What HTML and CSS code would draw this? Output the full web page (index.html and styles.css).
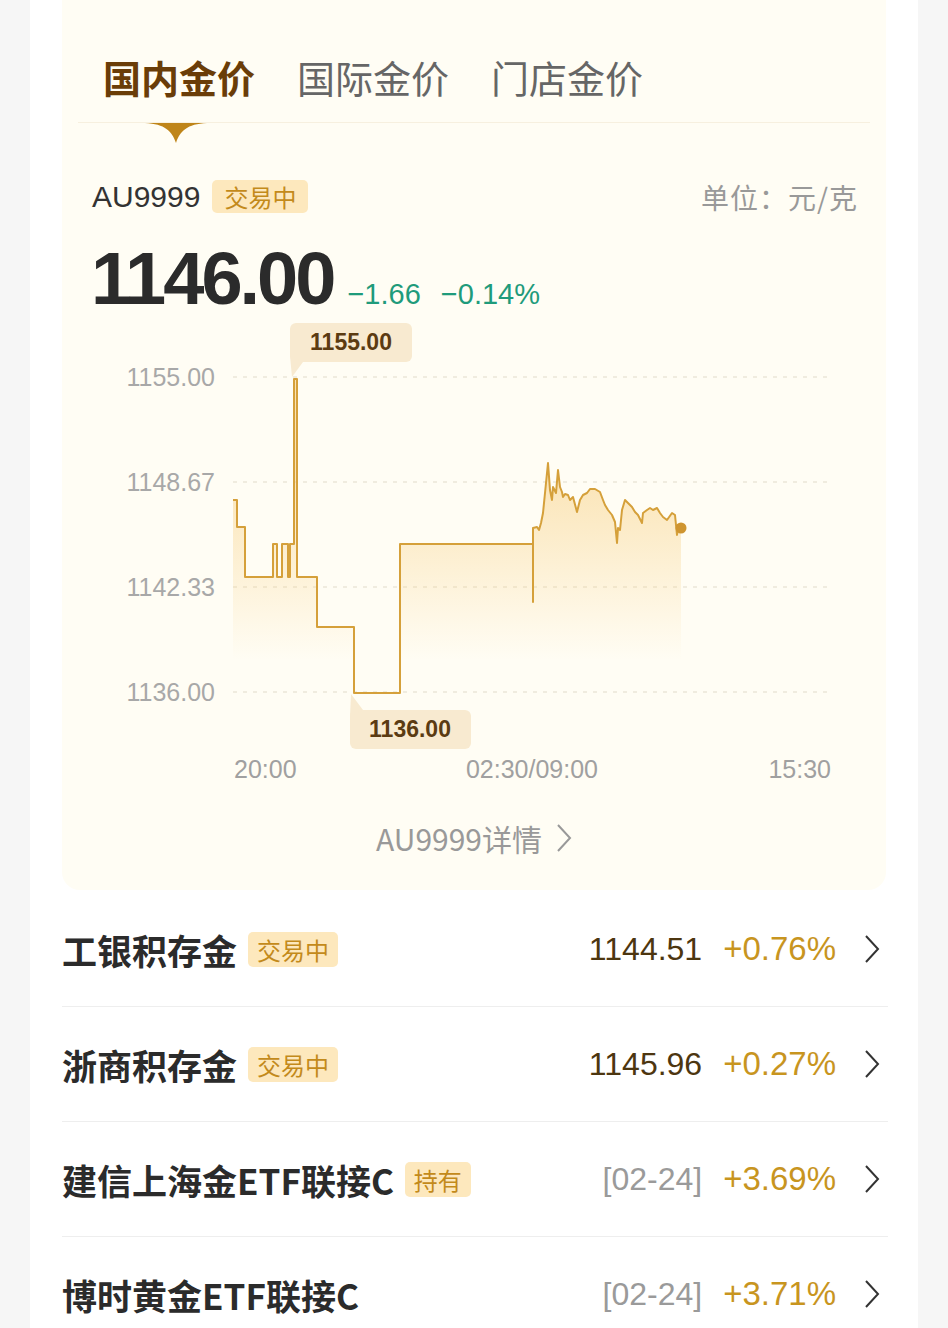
FILE: index.html
```html
<!DOCTYPE html>
<html lang="zh-CN">
<head>
    <meta charset="UTF-8">
    <meta name="viewport" content="width=device-width, initial-scale=1.0">
    <title>金价</title>
    <link rel="stylesheet" href="styles.css">
</head>
<body>
    <div class="page">
        <section class="card">
            <nav class="tabs">
                <span class="tab active">国内金价</span>
                <span class="tab">国际金价</span>
                <span class="tab">门店金价</span>
            </nav>

            <div class="quote-head">
                <div class="quote-name">
                    <span class="code">AU9999</span>
                    <span class="badge">交易中</span>
                </div>
                <span class="unit">单位：元/克</span>
            </div>

            <div class="quote-price">
                <span class="price">1146.00</span>
                <span class="change">−1.66</span>
                <span class="change">−0.14%</span>
            </div>

            <svg class="chart" width="824" height="470" viewBox="62 320 824 470">
                <defs>
                    <linearGradient id="fill" x1="0" y1="460" x2="0" y2="660" gradientUnits="userSpaceOnUse">
                        <stop offset="0" stop-color="#f6c870" stop-opacity="0.5"/>
                        <stop offset="1" stop-color="#f6c870" stop-opacity="0"/>
                    </linearGradient>
                </defs>

                <g class="grid">
                    <line x1="233" y1="377" x2="833" y2="377"/>
                    <line x1="233" y1="482" x2="833" y2="482"/>
                    <line x1="233" y1="587" x2="833" y2="587"/>
                    <line x1="233" y1="692" x2="833" y2="692"/>
                </g>

                <g class="y-labels">
                    <text x="215" y="386">1155.00</text>
                    <text x="215" y="491">1148.67</text>
                    <text x="215" y="596">1142.33</text>
                    <text x="215" y="701">1136.00</text>
                </g>

                <path class="area" d="M233,500 H237 V527 H245 V577 H273 V544 H277 V577 H282 V544 H288 V577 H290 V544 H292 V544 H294 V379 H297 V577 H317 V627 H354 V693 H400 V544 H533 V602 V528 L537,527 L539,530 L541,523 L543,513 L545,493 L548,463 L550,490 L552,500 L553,487 L556,493 L558,470 L560,487 L562,492 L563,497 L565,494 L568,495 L570,500 L573,497 L577,512 L580,500 L583,495 L587,493 L590,489 L595,489 L600,492 L603,500 L605,505 L608,510 L612,515 L615,522 L617,543 L618,528 L620,530 L622,510 L625,500 L628,503 L632,507 L635,512 L638,515 L642,523 L643,513 L647,510 L650,508 L653,510 L657,508 L660,513 L663,517 L667,520 L672,513 L675,515 L677,535 L678,527 L681,528 V700 H233 Z"/>
                <path class="line" d="M233,500 H237 V527 H245 V577 H273 V544 H277 V577 H282 V544 H288 V577 H290 V544 H292 V544 H294 V379 H297 V577 H317 V627 H354 V693 H400 V544 H533 V602 V528 L537,527 L539,530 L541,523 L543,513 L545,493 L548,463 L550,490 L552,500 L553,487 L556,493 L558,470 L560,487 L562,492 L563,497 L565,494 L568,495 L570,500 L573,497 L577,512 L580,500 L583,495 L587,493 L590,489 L595,489 L600,492 L603,500 L605,505 L608,510 L612,515 L615,522 L617,543 L618,528 L620,530 L622,510 L625,500 L628,503 L632,507 L635,512 L638,515 L642,523 L643,513 L647,510 L650,508 L653,510 L657,508 L660,513 L663,517 L667,520 L672,513 L675,515 L677,535 L678,527 L681,528"/>
                <circle class="dot" cx="681" cy="528" r="5.5"/>

                <g class="tip">
                    <rect x="290" y="323" width="122" height="39" rx="6"/>
                    <polygon points="290,356 303,362 292,377"/>
                    <text x="351" y="350">1155.00</text>
                </g>
                <g class="tip">
                    <rect x="350" y="710" width="121" height="39" rx="6"/>
                    <polygon points="350,716 363,710 351,694"/>
                    <text x="410" y="737">1136.00</text>
                </g>

                <g class="x-labels">
                    <text x="234" y="778" text-anchor="start">20:00</text>
                    <text x="532" y="778" text-anchor="middle">02:30/09:00</text>
                    <text x="831" y="778" text-anchor="end">15:30</text>
                </g>
            </svg>

            <a class="detail" href="#">
                <span>AU9999详情</span>
                <svg width="16" height="30" viewBox="0 0 16 30"><polyline points="2,2 14,15 2,28"/></svg>
            </a>
        </section>

        <ul class="fund-list">
            <li class="fund">
                <div class="fund-name">工银积存金<span class="badge">交易中</span></div>
                <div class="fund-data">
                    <span class="fund-price">1144.51</span>
                    <span class="fund-change">+0.76%</span>
                    <svg class="arrow" width="16" height="30" viewBox="0 0 16 30"><polyline points="2,2 14,15 2,28"/></svg>
                </div>
            </li>
            <li class="fund">
                <div class="fund-name">浙商积存金<span class="badge">交易中</span></div>
                <div class="fund-data">
                    <span class="fund-price">1145.96</span>
                    <span class="fund-change">+0.27%</span>
                    <svg class="arrow" width="16" height="30" viewBox="0 0 16 30"><polyline points="2,2 14,15 2,28"/></svg>
                </div>
            </li>
            <li class="fund">
                <div class="fund-name">建信上海金ETF联接C<span class="badge">持有</span></div>
                <div class="fund-data">
                    <span class="fund-date">[02-24]</span>
                    <span class="fund-change">+3.69%</span>
                    <svg class="arrow" width="16" height="30" viewBox="0 0 16 30"><polyline points="2,2 14,15 2,28"/></svg>
                </div>
            </li>
            <li class="fund">
                <div class="fund-name">博时黄金ETF联接C</div>
                <div class="fund-data">
                    <span class="fund-date">[02-24]</span>
                    <span class="fund-change">+3.71%</span>
                    <svg class="arrow" width="16" height="30" viewBox="0 0 16 30"><polyline points="2,2 14,15 2,28"/></svg>
                </div>
            </li>
        </ul>
    </div>
</body>
</html>
```

FILE: styles.css
```css
body {
    margin: 0;
    padding: 0;
    background-color: #f6f6f6;
    font-family: "Noto Sans CJK SC", sans-serif;
}
.page {
    width: 888px;
    min-height: 100vh;
    margin: 0 auto;
    background-color: #fff;
    overflow: hidden;
}
.card {
    margin: 0 32px;
    padding-bottom: 32px;
    background-color: #fffdf4;
    border-radius: 0 0 18px 18px;
}
.tabs {
    display: flex;
    gap: 42px;
    margin: 0 16px;
    padding: 58px 0 26px 25px;
    border-bottom: 1px solid #f7f0df;
}
.tab {
    font-size: 38px;
    line-height: 38px;
    color: #666;
}
.tab.active {
    position: relative;
    font-weight: bold;
    color: #6a3d08;
}
.tab.active::after {
    content: "";
    position: absolute;
    top: 65px;
    left: 42px;
    width: 62px;
    height: 20px;
    background-color: #bf8519;
    clip-path: path('M0,0 H62 C42,1 35,8 31,20 C27,8 20,1 0,0 Z');
}
.quote-head {
    display: flex;
    justify-content: space-between;
    align-items: center;
    height: 33px;
    margin-top: 57px;
    padding: 0 28px 0 30px;
}
.quote-name {
    display: flex;
    align-items: center;
    gap: 12px;
}
.code {
    font-family: "Liberation Sans", sans-serif;
    font-size: 30px;
    color: #333;
}
.badge {
    display: inline-block;
    padding: 0 12px;
    font-size: 24px;
    line-height: 33px;
    color: #c38a1b;
    background-color: #fde8bd;
    border-radius: 5px;
}
.unit {
    font-size: 28px;
    letter-spacing: 1px;
    color: #999;
}
.quote-price {
    display: flex;
    align-items: baseline;
    margin-top: 27px;
    padding-left: 29px;
    height: 77px;
}
.price {
    font-family: "Liberation Sans", sans-serif;
    font-size: 74px;
    line-height: 77px;
    font-weight: bold;
    letter-spacing: -3px;
    color: #2b2b2b;
}
.change {
    margin-left: 14px;
    font-family: "Liberation Sans", sans-serif;
    font-size: 29px;
    color: #1f9b7b;
}
.change + .change {
    margin-left: 20px;
}
.chart {
    display: block;
    margin-top: 3px;
}
.grid line {
    stroke: #ece6d8;
    stroke-width: 1.5;
    stroke-dasharray: 4 6;
}
.y-labels text {
    font-family: "Liberation Sans", sans-serif;
    font-size: 25px;
    fill: #a8a8a8;
    text-anchor: end;
}
.x-labels text {
    font-family: "Liberation Sans", sans-serif;
    font-size: 25px;
    fill: #a0a0a0;
}
.area {
    fill: url(#fill);
}
.line {
    fill: none;
    stroke: #d5a03a;
    stroke-width: 2;
    stroke-linejoin: round;
}
.dot {
    fill: #cf9530;
}
.tip rect,
.tip polygon {
    fill: #f8ead0;
}
.tip text {
    font-family: "Liberation Sans", sans-serif;
    font-size: 23px;
    font-weight: bold;
    fill: #5b3b12;
    text-anchor: middle;
}
.detail {
    display: flex;
    justify-content: center;
    align-items: center;
    gap: 14px;
    margin-top: 28px;
    height: 40px;
    font-size: 30px;
    color: #999;
    text-decoration: none;
}
.detail svg polyline,
.arrow polyline {
    fill: none;
    stroke: #999;
    stroke-width: 2;
}
.fund-list {
    list-style: none;
    margin: 2px 30px 0 32px;
    padding: 0;
}
.fund {
    display: flex;
    justify-content: space-between;
    align-items: center;
    height: 114px;
    border-bottom: 1px solid #eee;
}
.fund-name {
    display: flex;
    align-items: center;
    font-size: 35px;
    font-weight: bold;
    color: #2b2b2b;
}
.fund-name .badge {
    margin-left: 11px;
    padding: 0 9px;
    line-height: 35px;
    font-weight: normal;
}
.fund-data {
    display: flex;
    align-items: center;
    padding-right: 8px;
    font-family: "Liberation Sans", sans-serif;
    font-size: 32px;
}
.fund-price {
    color: #4d3610;
}
.fund-date {
    color: #9a9a9a;
}
.fund-change {
    margin-left: 21px;
    font-size: 33px;
    color: #c8951f;
}
.arrow {
    margin-left: 28px;
}
.arrow polyline {
    stroke: #333;
}
```
